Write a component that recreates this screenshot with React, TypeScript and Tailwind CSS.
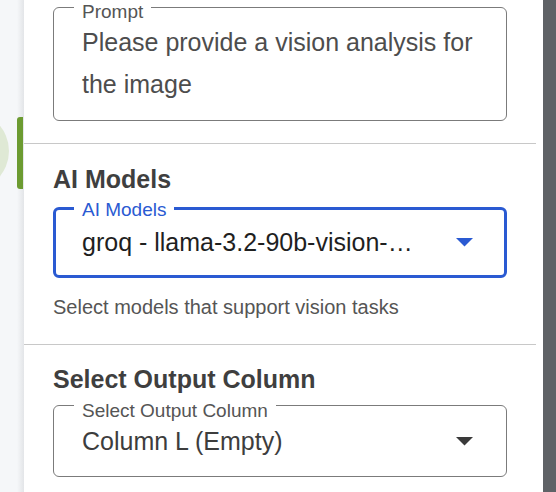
import React from 'react';

const font = { fontFamily: '"Liberation Sans", Arial, sans-serif' };

function Caret({ color }: { color: string }) {
  return (
    <svg width="17" height="9" viewBox="0 0 17 9" className="shrink-0">
      <path d="M0 0 L17 0 L8.5 8.5 Z" fill={color} />
    </svg>
  );
}

export default function App() {
  return (
    <div className="flex h-[492px] w-[556px] overflow-hidden bg-white" style={font}>
      {/* left rail (page behind the drawer) */}
      <div className="relative w-[24px] shrink-0 bg-[#f5f7f9]">
        <div className="absolute right-0 top-0 h-full w-[7px] bg-gradient-to-r from-transparent to-[#e3e5e8]"></div>
        <div className="absolute left-[-71px] top-[111px] h-[80px] w-[80px] rounded-full bg-[#dfe9d5]"></div>
        <div className="absolute left-[17px] top-[117px] h-[72px] w-[6px] rounded-l-[3px] bg-[#6c9b31]"></div>
      </div>

      {/* drawer panel */}
      <div className="flex flex-1 bg-white">
        <div className="w-[512px] shrink-0">
          {/* Prompt */}
          <section className="border-b border-[#c8c8c8] px-[29px] pb-[22px] pt-[7px]">
            <div className="relative h-[114px] rounded-[6px] border border-[#7b7b7b] pl-[28px] pr-[20px] pt-[13px]">
              <span className="absolute left-[20px] top-[3px] -translate-y-1/2 bg-white px-[8px] text-[19px] leading-none text-[#555]">
                Prompt
              </span>
              <p className="text-[25px] leading-[42px] text-[#4d4d4d]">
                Please provide a vision analysis for the image
              </p>
            </div>
          </section>

          {/* AI Models */}
          <section className="border-b border-[#c8c8c8] px-[29px] pb-[25px] pt-[20px]">
            <h2 className="text-[25px] font-bold leading-[30px] text-[#3f3f3f]">AI Models</h2>
            <div className="relative mt-[13px] flex h-[71px] items-center justify-between rounded-[6px] border-[3px] border-[#2a5ad2] pl-[26px] pr-[31px]">
              <span className="absolute left-[18px] top-[-1px] -translate-y-1/2 bg-white px-[8px] text-[19px] leading-none text-[#2a5ad2]">
                AI Models
              </span>
              <span className="text-[25px] leading-none text-[#1f1f1f]">groq - llama-3.2-90b-vision-…</span>
              <Caret color="#2a5ad2" />
            </div>
            <p className="mt-[17px] text-[20px] leading-[24px] text-[#555]">Select models that support vision tasks</p>
          </section>

          {/* Output column */}
          <section className="px-[29px] pt-[19px]">
            <h2 className="text-[25px] font-bold leading-[30px] text-[#3f3f3f]">Select Output Column</h2>
            <div className="relative mt-[11px] flex h-[72px] items-center justify-between rounded-[6px] border border-[#7b7b7b] pl-[28px] pr-[33px]">
              <span className="absolute left-[20px] top-[4px] -translate-y-1/2 bg-white px-[8px] text-[19px] leading-none text-[#555]">
                Select Output Column
              </span>
              <span className="text-[25px] leading-none text-[#3d3d3d]">Column L (Empty)</span>
              <Caret color="#3a3a3a" />
            </div>
          </section>
        </div>
        <div className="flex-1"></div>
        <div className="w-[13px] shrink-0 bg-[#5f6266]"></div>
      </div>
    </div>
  );
}
